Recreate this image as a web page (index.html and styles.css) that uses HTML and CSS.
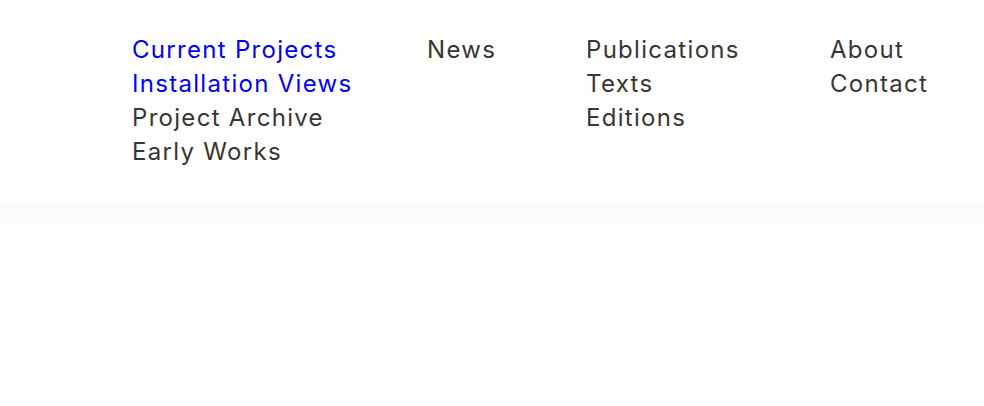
FILE: index.html
```html
<!DOCTYPE html>
<html lang="en">
<head>
<meta charset="utf-8">
<link rel="stylesheet" href="styles.css">
</head>
<body>
<header class="site-header">
  <nav class="nav">
    <ul class="col col-1">
      <li><a class="active" href="#">Current Projects</a></li>
      <li><a class="active" href="#">Installation Views</a></li>
      <li><a href="#">Project Archive</a></li>
      <li><a href="#">Early Works</a></li>
    </ul>
    <ul class="col col-2">
      <li><a href="#">News</a></li>
    </ul>
    <ul class="col col-3">
      <li><a href="#">Publications</a></li>
      <li><a href="#">Texts</a></li>
      <li><a href="#">Editions</a></li>
    </ul>
    <ul class="col col-4">
      <li><a href="#">About</a></li>
      <li><a href="#">Contact</a></li>
    </ul>
  </nav>
</header>
<div class="fade"></div>
</body>
</html>
```

FILE: styles.css
```css
html, body {
  margin: 0;
  padding: 0;
  background: #fff;
}
body {
  font-family: Inter, "Noto Sans", sans-serif;
  font-size: 24px;
  line-height: 34px;
  letter-spacing: 1.3px;
  color: #363636;
}
.site-header {
  height: 203px;
  box-sizing: border-box;
  padding: 33px 0 0 132px;
}
.nav {
  display: flex;
}
.col {
  list-style: none;
  margin: 0;
  padding: 0;
}
.col-1 { width: 295px; }
.col-2 { width: 159px; }
.col-3 { width: 244px; }
.col a {
  color: #363636;
  text-decoration: none;
}
.col a.active {
  color: #0000ff;
}
.fade {
  height: 48px;
  background: linear-gradient(to bottom, #fafafa, #ffffff);
}
```
